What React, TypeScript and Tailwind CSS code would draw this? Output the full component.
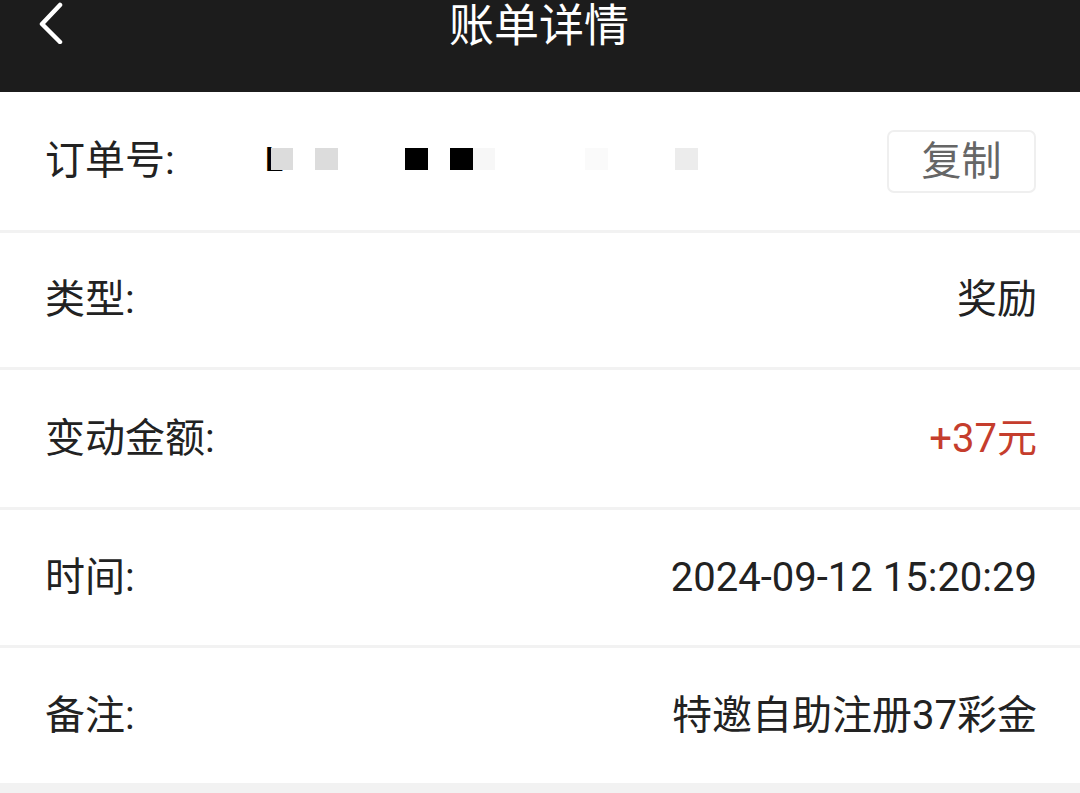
import React from "react";

const font = { fontFamily: 'Roboto, "Noto Sans CJK SC", sans-serif' };

function Row({ label, children, h }: { label: string; children?: React.ReactNode; h: string }) {
  return (
    <div className={`flex items-center justify-between bg-white pl-[45px] pr-[43px] ${h}`}>
      <span className="text-[40px] leading-none text-[#222]">{label}</span>
      {children}
    </div>
  );
}

export default function App() {
  return (
    <div className="w-[1080px] h-[793px] bg-[#f2f2f2] overflow-hidden" style={font}>
      <div className="relative h-[92px] bg-[#1c1c1c] flex justify-center">
        <svg className="absolute left-[36px] top-[2px]" width="30" height="42" viewBox="0 0 30 42">
          <path d="M24 3 L6 22 L24 40" fill="none" stroke="#fff" strokeWidth="4.5" strokeLinecap="round" strokeLinejoin="round" />
        </svg>
        <span className="text-[45px] leading-none text-white mt-[4px] ml-[-2px]">账单详情</span>
      </div>
      <div className="flex flex-col gap-[3px]">
        <div className="flex items-center bg-white pl-[45px] pr-[44px] h-[138px]">
          <span className="text-[40px] leading-none text-[#222]">订单号:</span>
          <div className="relative ml-[90px] flex items-center h-[30px] w-[450px]">
            <span className="absolute left-0 top-[-4px] text-[34px] font-medium leading-none text-black">L</span>
            <div className="absolute left-[6px] top-[2px] w-[22px] h-[22px] bg-[#dcdcdc]" />
            <div className="absolute left-[50px] top-[2px] w-[23px] h-[22px] bg-[#dcdcdc]" />
            <div className="absolute left-[140px] top-[2px] w-[23px] h-[22px] bg-black" />
            <div className="absolute left-[185px] top-[2px] w-[23px] h-[22px] bg-black" />
            <div className="absolute left-[208px] top-[2px] w-[22px] h-[22px] bg-[#f7f7f7]" />
            <div className="absolute left-[320px] top-[2px] w-[23px] h-[22px] bg-[#fafafa]" />
            <div className="absolute left-[410px] top-[2px] w-[23px] h-[22px] bg-[#ececec]" />
          </div>
          <div className="ml-auto flex items-center justify-center w-[149px] h-[63px] border-2 border-[#efefef] rounded-[7px] mt-[1px]">
            <span className="text-[40px] leading-none text-[#666]">复制</span>
          </div>
        </div>
        <Row label="类型:" h="h-[134px]">
          <span className="text-[40px] leading-none text-[#222]">奖励</span>
        </Row>
        <Row label="变动金额:" h="h-[137px]">
          <span className="text-[40px] leading-none text-[#c53d2d]">+37元</span>
        </Row>
        <Row label="时间:" h="h-[135px]">
          <span className="text-[40px] leading-none text-[#222]">2024-09-12 15:20:29</span>
        </Row>
        <Row label="备注:" h="h-[135px]">
          <span className="text-[40px] leading-none text-[#222]">特邀自助注册37彩金</span>
        </Row>
      </div>
    </div>
  );
}
